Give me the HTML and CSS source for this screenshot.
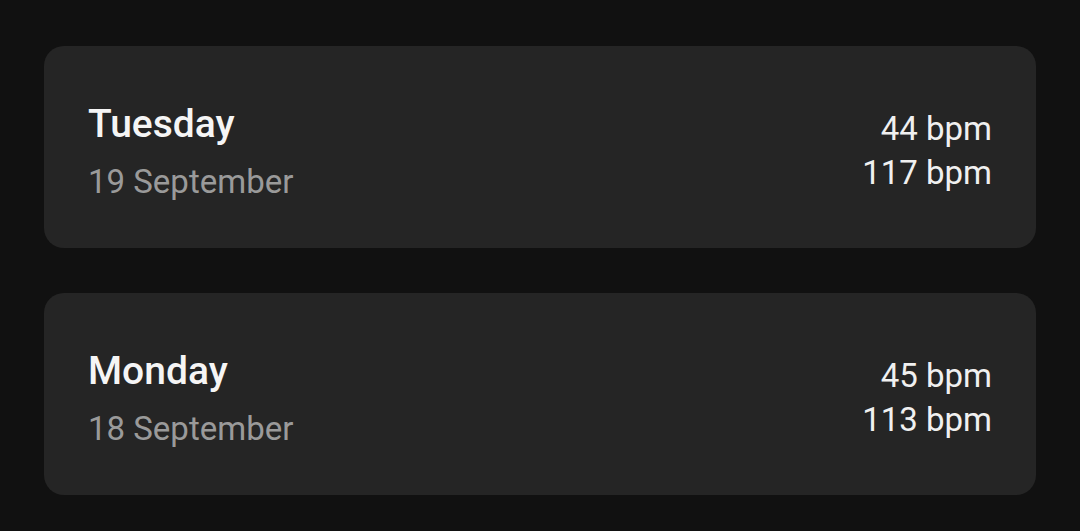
FILE: index.html
```html
<!DOCTYPE html>
<html>
<head>
<meta charset="utf-8">
<link rel="stylesheet" href="styles.css">
</head>
<body>
<div class="list">
  <div class="card">
    <div class="day">
      <div class="day-name">Tuesday</div>
      <div class="day-date">19 September</div>
    </div>
    <div class="rates">
      <div class="rate">44 bpm</div>
      <div class="rate">117 bpm</div>
    </div>
  </div>
  <div class="card">
    <div class="day">
      <div class="day-name">Monday</div>
      <div class="day-date">18 September</div>
    </div>
    <div class="rates">
      <div class="rate">45 bpm</div>
      <div class="rate">113 bpm</div>
    </div>
  </div>
</div>
</body>
</html>
```
FILE: styles.css
```css
html, body {
  margin: 0;
  padding: 0;
  background: #111111;
  font-family: Roboto, "Noto Sans", sans-serif;
  width: 1080px;
  height: 531px;
  overflow: hidden;
}
.list {
  display: flex;
  flex-direction: column;
  gap: 45px;
  padding: 46px 44px 0 44px;
}
.card {
  background: #252525;
  border-radius: 20px;
  height: 202px;
  box-sizing: border-box;
  padding: 8px 44px 0 44px;
  display: flex;
  justify-content: space-between;
  align-items: center;
}
.day {
  display: flex;
  flex-direction: column;
  padding-top: 2px;
}
.day-name {
  color: #f5f5f5;
  font-size: 39px;
  font-weight: 500;
  line-height: 60px;
}
.day-date {
  color: #9a9a9a;
  font-size: 33px;
  line-height: 56px;
}
.rates {
  display: flex;
  flex-direction: column;
  align-items: flex-end;
}
.rate {
  color: #f0f0f0;
  font-size: 33px;
  line-height: 44px;
}
```
